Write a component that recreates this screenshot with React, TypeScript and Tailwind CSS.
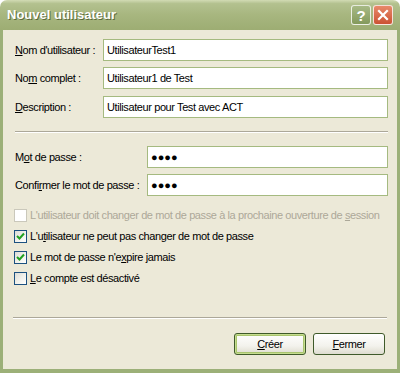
import { ReactNode } from "react";

const font = "font-['Liberation_Sans',Arial,sans-serif]";

const Mn = ({ children }: { children: ReactNode }) => <span className="underline underline-offset-[1px]">{children}</span>;

const Field = ({ value, className = "" }: { value: string; className?: string }) => (
    <div className={`h-[22px] bg-white border border-[#a5ba80] flex items-center pl-[3px] text-[11px] text-black ${className}`}>
        {value}
    </div>
);

const Check = ({ checked, disabled, children }: { checked?: boolean; disabled?: boolean; children: ReactNode }) => (
    <div className={`h-[21px] flex items-center gap-[3px] text-[11px] whitespace-nowrap ${disabled ? "text-[#aca899]" : "text-black"}`}>
        <span
            className={`w-[13px] h-[13px] shrink-0 border flex items-center justify-center ${
                disabled
                    ? "border-[#cac8bb] bg-white"
                    : "border-[#1c5180] bg-[linear-gradient(135deg,#dcdcd7_0%,#f0f0ea_50%,#ffffff_100%)]"
            }`}
        >
            {checked && (
                <svg width="9" height="9" viewBox="0 0 9 9">
                    <polyline points="1,4 3.5,6.5 8,1.5" fill="none" stroke="#21a121" strokeWidth="2" />
                </svg>
            )}
        </span>
        <span>{children}</span>
    </div>
);

const Button = ({ children, isDefault }: { children: ReactNode; isDefault?: boolean }) => (
    <button
        className={`w-[72px] h-[22px] rounded-[3px] border border-[#3f5a2a] text-[11px] text-black bg-[linear-gradient(#ffffff,#f3f2ec_60%,#dedccf)] ${
            isDefault ? "shadow-[inset_0_0_0_1px_#c6dd8f,inset_0_0_0_2px_#a9c56e]" : ""
        }`}
    >
        {children}
    </button>
);

export default function App() {
    return (
        <div className={`w-[400px] h-[373px] flex flex-col ${font}`}>
            <div className="h-[30px] shrink-0 rounded-t-[7px] bg-[linear-gradient(#d2dbb4,#b3c18f_12%,#a7b67f_50%,#9dad73)] flex items-center pl-[7px] pr-[4px]">
                <span className="text-white font-bold text-[13px] [text-shadow:1px_1px_0_#5b6b3c] flex-1">Nouvel utilisateur</span>
                <div className="flex gap-[2px] pr-[3px]">
                    <span className="w-[20px] h-[20px] rounded-[3px] border border-white/80 bg-[linear-gradient(#a7b985,#849a5c)] flex items-center justify-center text-white font-bold text-[15px] leading-none">
                        ?
                    </span>
                    <span className="w-[20px] h-[20px] rounded-[3px] border border-white/80 bg-[linear-gradient(#e8896a,#cb5233)] flex items-center justify-center">
                        <svg width="12" height="12" viewBox="0 0 12 12">
                            <path d="M2 2 L10 10 M10 2 L2 10" stroke="white" strokeWidth="2.2" strokeLinecap="square" />
                        </svg>
                    </span>
                </div>
            </div>
            <div className="flex-1 bg-[#ece9d8] border-x-[3px] border-b-[4px] border-[#9cb078] flex flex-col pl-[12px] pr-[9px] text-[11px] tracking-[-0.4px] text-black">
                <div className="mt-[9px] flex items-center">
                    <span className="w-[88px] whitespace-nowrap"><Mn>N</Mn>om d'utilisateur :</span>
                    <Field value="UtilisateurTest1" className="flex-1" />
                </div>
                <div className="mt-[6px] flex items-center">
                    <span className="w-[88px] whitespace-nowrap">No<Mn>m</Mn> complet :</span>
                    <Field value="Utilisateur1 de Test" className="flex-1" />
                </div>
                <div className="mt-[7px] flex items-center">
                    <span className="w-[88px] whitespace-nowrap"><Mn>D</Mn>escription :</span>
                    <Field value="Utilisateur pour Test avec ACT" className="flex-1" />
                </div>
                <div className="mt-[13px] h-[2px] border-t border-t-[#aca899] border-b border-b-white" />
                <div className="mt-[13px] flex items-center">
                    <span className="w-[132px] whitespace-nowrap">M<Mn>o</Mn>t de passe :</span>
                    <Field value="●●●●" className="flex-1 text-[10px] tracking-[0px]" />
                </div>
                <div className="mt-[6px] flex items-center">
                    <span className="w-[132px] whitespace-nowrap">Confi<Mn>r</Mn>mer le mot de passe :</span>
                    <Field value="●●●●" className="flex-1 text-[10px] tracking-[0px]" />
                </div>
                <div className="mt-[9px] flex flex-col -ml-[1px]">
                    <Check disabled>L'utilisateur doit changer de mot de passe à la prochaine ouverture de <Mn>s</Mn>ession</Check>
                    <Check checked>L'u<Mn>t</Mn>ilisateur ne peut pas changer de mot de passe</Check>
                    <Check checked>Le mot de passe n'e<Mn>x</Mn>pire jamais</Check>
                    <Check><Mn>L</Mn>e compte est désactivé</Check>
                </div>
                <div className="mt-[28px] -ml-[2px] mr-[1px] h-[2px] border-t border-t-[#aca899] border-b border-b-white" />
                <div className="mt-[14px] flex justify-end gap-[7px] pr-[3px]">
                    <Button isDefault><Mn>C</Mn>réer</Button>
                    <Button><Mn>F</Mn>ermer</Button>
                </div>
            </div>
        </div>
    );
}
